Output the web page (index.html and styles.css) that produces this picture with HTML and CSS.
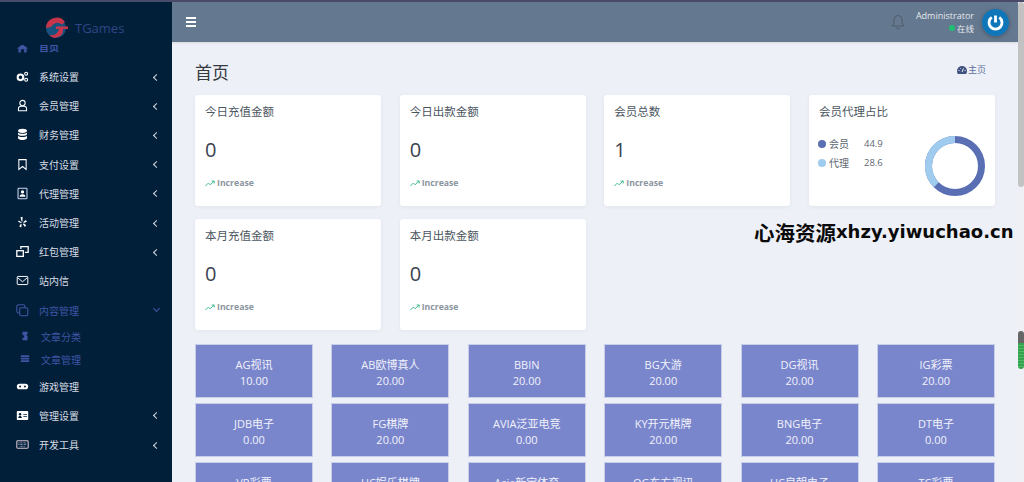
FILE: index.html
```html
<!DOCTYPE html>
<html lang="zh">
<head>
<meta charset="utf-8">
<title>TGames</title>
<link rel="stylesheet" href="styles.css">
</head>
<body>
<div class="topline"></div>
<div class="app">
<aside class="sidebar">
  <div class="logo">
    <svg class="logo-mark" width="26" height="26" viewBox="0 0 26 26"><circle cx="12" cy="13" r="10" fill="#17527f"/><path d="M2 13A10.500 10.500 0 0 1 21 7l-3 2.500A7 7 0 0 0 7 12Z" fill="#c8344a"/><path d="M12 11.500H24V14H19A8 8 0 0 1 5 20C11 21 14 18 15 14H12Z" fill="#c8344a"/></svg>
    <span class="logo-text">TGames</span>
  </div>
  <nav class="menu">
    <a class="item home"><svg class="ic" viewBox="0 0 16 16"><path d="M8 3 1 8h2v5h3V9h4v4h3V8h2Z" fill="#3f56a6"/></svg><span>首页</span></a>
    <a class="item"><svg class="ic" viewBox="0 0 16 16"><circle cx="5.500" cy="9" r="3.500" fill="none" stroke="#fff" stroke-width="2.500"/><circle cx="12.500" cy="4.500" r="1.800" fill="none" stroke="#fff" stroke-width="1.400"/><circle cx="12.500" cy="12" r="1.800" fill="none" stroke="#fff" stroke-width="1.400"/></svg><span>系统设置</span><i class="chev"></i></a>
    <a class="item"><svg class="ic" viewBox="0 0 16 16"><circle cx="8" cy="5" r="3.300" fill="none" stroke="#fff" stroke-width="1.300"/><path d="M3 14.500V12a3 3 0 0 1 3-3h4a3 3 0 0 1 3 3v2.500Z" fill="none" stroke="#fff" stroke-width="1.300"/></svg><span>会员管理</span><i class="chev"></i></a>
    <a class="item"><svg class="ic" viewBox="0 0 16 16"><ellipse cx="8" cy="3.500" rx="5.500" ry="2.500" fill="#fff"/><path d="M2.500 5.500c1 2 10 2 11 0V8c-1 2-10 2-11 0Zm0 4c1 2 10 2 11 0v3c-1 3-10 3-11 0Z" fill="#fff"/></svg><span>财务管理</span><i class="chev"></i></a>
    <a class="item"><svg class="ic" viewBox="0 0 16 16"><path d="M3.500 2h9v12L8 10.500 3.500 14Z" fill="none" stroke="#fff" stroke-width="1.300"/></svg><span>支付设置</span><i class="chev"></i></a>
    <a class="item"><svg class="ic" viewBox="0 0 16 16"><rect x="2.500" y="1.500" width="11" height="13" rx="1" fill="none" stroke="#cdd6f0" stroke-width="1.300"/><circle cx="8" cy="6" r="2" fill="#fff"/><path d="M4.500 12c0-4 7-4 7 0Z" fill="#fff"/></svg><span>代理管理</span><i class="chev"></i></a>
    <a class="item"><svg class="ic" viewBox="0 0 16 16"><path d="M5.500 1.500 8 1v5.500L7 7ZM2.500 7l1-1.500L7 8l-.5 1ZM4 13l2-3.500 1 .5-.5 4ZM8.500 10l1-1 3 2.500-1.500 2ZM9 7.500l3-2.500 1.500 2-4 1.500Z" fill="#fff"/></svg><span>活动管理</span><i class="chev"></i></a>
    <a class="item"><svg class="ic" viewBox="0 0 16 16"><rect x="1" y="7" width="8" height="7" fill="none" stroke="#fff" stroke-width="1.600"/><path d="M6 5V2h9v7h-4" fill="none" stroke="#fff" stroke-width="1.600"/></svg><span>红包管理</span><i class="chev"></i></a>
    <a class="item"><svg class="ic" viewBox="0 0 16 16"><rect x="1.500" y="3" width="13" height="10" rx="1" fill="none" stroke="#fff" stroke-width="1.200"/><path d="m2 4.500 6 5 6-5" fill="none" stroke="#fff" stroke-width="1.200"/></svg><span>站内信</span></a>
    <a class="item open"><svg class="ic" viewBox="0 0 16 16"><rect x="1" y="1" width="10" height="10" rx="2" fill="none" stroke="#3f56a6" stroke-width="1.300"/><rect x="4.500" y="4.500" width="10" height="10" rx="2" fill="#021f3a" stroke="#3f56a6" stroke-width="1.300"/></svg><span>内容管理</span><i class="chev down"></i></a>
    <a class="sub"><svg class="ic-sub" viewBox="0 0 12 12"><path d="M3 1h6v3H8v2h1v5H3V8h2V5H3Z" fill="#3f56a6"/></svg><span>文章分类</span></a>
    <a class="sub last"><svg class="ic-sub" viewBox="0 0 12 12"><path d="M1 1.500h10v2H1Zm0 3h10v2H1Zm0 3h10v2H1Z" fill="#3f56a6"/></svg><span>文章管理</span></a>
    <a class="item"><svg class="ic" viewBox="0 0 16 16"><rect x="1" y="4.500" width="14" height="7" rx="3.500" fill="#fff"/><circle cx="5" cy="8" r="1.200" fill="#021f3a"/><circle cx="11" cy="8" r="1.200" fill="#021f3a"/></svg><span>游戏管理</span></a>
    <a class="item"><svg class="ic" viewBox="0 0 16 16"><rect x="1" y="2.500" width="14" height="11" rx="1" fill="#fff"/><circle cx="5" cy="6.500" r="1.500" fill="#021f3a"/><path d="M2.800 11c0-3 4.400-3 4.400 0ZM9 6h4.500v1H9Zm0 2.500h4.500v1H9Z" fill="#021f3a"/></svg><span>管理设置</span><i class="chev"></i></a>
    <a class="item"><svg class="ic" viewBox="0 0 16 16"><rect x="1" y="3.500" width="14" height="9" rx="1" fill="none" stroke="#d7c6d2" stroke-width="1.300"/><path d="M3 6h10M3 8h10M4.500 10.300h7" stroke="#c9c6da" stroke-width="1" stroke-dasharray="1 .7"/></svg><span>开发工具</span><i class="chev"></i></a>
  </nav>
</aside>
<div class="main">
  <header class="topbar">
    <div class="burger"><b></b><b></b><b></b></div>
    <div class="top-right">
      <svg class="bell" width="14" height="16" viewBox="0 0 14 16"><path d="M7 1.500a4 4 0 0 0-4 4V9l-2 3h12l-2-3V5.500a4 4 0 0 0-4-4ZM5.500 13.500a1.500 1.500 0 0 0 3 0" fill="none" stroke="#4f5c6b" stroke-width="1"/></svg>
      <div class="user">
        <div class="uname">Administrator</div>
        <div class="ustatus"><i class="dot"></i>在线</div>
      </div>
      <div class="avatar"><svg width="27" height="27" viewBox="0 0 27 27"><circle cx="13.500" cy="13.500" r="13.500" fill="#0f76b9"/><path d="M9.700 8.400a6.500 6.500 0 1 0 7.600 0" fill="none" stroke="#fff" stroke-width="2.800"/><path d="M13.500 6.500v7" stroke="#fff" stroke-width="2.800"/></svg></div>
    </div>
  </header>
  <main class="content">
    <div class="page-head">
      <h1>首页</h1>
      <div class="crumb"><svg width="10" height="10" viewBox="0 0 10 10"><path d="M5 1a5 5 0 0 0-5 5c0 1 .3 2 .8 3h8.400c.5-1 .8-2 .8-3a5 5 0 0 0-5-5Z" fill="#3f5280"/><path d="M5 7 6.500 3.500M1.500 5.500h1M7.500 5.500h1M3 3l.6.6" stroke="#eef0f7" stroke-width="1"/></svg><span>主页</span></div>
    </div>
    <section class="cards">
      <article class="card"><h3>今日充值金额</h3><div class="num">0</div><div class="inc"><svg width="10" height="7" viewBox="0 0 12 8"><path d="M.5 7 4 3.500 6 5.500 11 1M8 1h3v3" fill="none" stroke="#45bd8f" stroke-width="1.200"/></svg>Increase</div></article>
      <article class="card"><h3>今日出款金额</h3><div class="num">0</div><div class="inc"><svg width="10" height="7" viewBox="0 0 12 8"><path d="M.5 7 4 3.500 6 5.500 11 1M8 1h3v3" fill="none" stroke="#45bd8f" stroke-width="1.200"/></svg>Increase</div></article>
      <article class="card"><h3>会员总数</h3><div class="num">1</div><div class="inc"><svg width="10" height="7" viewBox="0 0 12 8"><path d="M.5 7 4 3.500 6 5.500 11 1M8 1h3v3" fill="none" stroke="#45bd8f" stroke-width="1.200"/></svg>Increase</div></article>
      <article class="card ratio">
        <h3>会员代理占比</h3>
        <div class="ratio-body">
          <ul class="legend">
            <li><i class="lg a"></i><span class="lg-name">会员</span><span class="lg-val">44.9</span></li>
            <li><i class="lg b"></i><span class="lg-name">代理</span><span class="lg-val">28.6</span></li>
          </ul>
          <svg class="donut" width="60" height="60" viewBox="0 0 60 60"><circle cx="30" cy="30" r="26.500" fill="none" stroke="#5a6eb4" stroke-width="7"/><path d="M30 3.500A26.500 26.500 0 0 0 11.300 48.800" fill="none" stroke="#9fcbef" stroke-width="7"/></svg>
        </div>
      </article>
      <article class="card"><h3>本月充值金额</h3><div class="num">0</div><div class="inc"><svg width="10" height="7" viewBox="0 0 12 8"><path d="M.5 7 4 3.500 6 5.500 11 1M8 1h3v3" fill="none" stroke="#45bd8f" stroke-width="1.200"/></svg>Increase</div></article>
      <article class="card"><h3>本月出款金额</h3><div class="num">0</div><div class="inc"><svg width="10" height="7" viewBox="0 0 12 8"><path d="M.5 7 4 3.500 6 5.500 11 1M8 1h3v3" fill="none" stroke="#45bd8f" stroke-width="1.200"/></svg>Increase</div></article>
    </section>
    <section class="games">
      <div class="game">AG视讯<br>10.00</div><div class="game">AB欧博真人<br>20.00</div><div class="game">BBIN<br>20.00</div><div class="game">BG大游<br>20.00</div><div class="game">DG视讯<br>20.00</div><div class="game">IG彩票<br>20.00</div>
      <div class="game">JDB电子<br>0.00</div><div class="game">FG棋牌<br>20.00</div><div class="game">AVIA泛亚电竞<br>0.00</div><div class="game">KY开元棋牌<br>20.00</div><div class="game">BNG电子<br>20.00</div><div class="game">DT电子<br>0.00</div>
      <div class="game">VR彩票</div><div class="game">UC娱乐棋牌</div><div class="game">Asia新宝体育</div><div class="game">OG东方视讯</div><div class="game">UC皇朝电子</div><div class="game">TC彩票</div>
    </section>
  </main>
</div>
<div class="scrollbar"><div class="thumb"></div><div class="mini"></div></div>
</div>
<div class="watermark"><span class="wm-cn">心海资源</span><span class="wm-en">xhzy.yiwuchao.cn</span></div>
</body>
</html>
```

FILE: styles.css
```css
* { box-sizing: border-box; }
html, body { margin: 0; height: 482px; overflow: hidden; }
body { font-family: "Open Sans", "Noto Sans CJK SC", sans-serif; background: #eef0f7; color: #343a40; }
.topline { height: 2px; background: #4a4a6a; }
.app { display: flex; height: 480px; overflow: hidden; }
.sidebar { width: 172px; flex: none; background: #021f3a; overflow: hidden; }
.logo { height: 43px; display: flex; align-items: center; padding: 8px 0 0 44px; gap: 5px; }
.logo-text { color: #2f4585; font-size: 13px; font-family: "Open Sans", sans-serif; }
.menu { display: flex; flex-direction: column; }
.item { height: 29.200px; flex: none; display: flex; align-items: center; padding-left: 16px; color: #d7dce3; font-size: 10px; font-family: "Noto Sans CJK SC", sans-serif; position: relative; }
.item .ic { width: 13px; height: 13px; margin-right: 10px; flex: none; }
.item.home { height: 10px; align-items: flex-start; overflow: hidden; color: #3f56a6; font-weight: 700; margin-bottom: 7px; }
.item.home .ic { margin-top: -3px; }
.item.home span { margin-top: -5px; line-height: 14px; }
.item.open { color: #3f56a6; }
.chev { position: absolute; left: 154px; top: 50%; width: 5px; height: 5px; margin-top: -2px; border-left: 1.500px solid #d7dce3; border-bottom: 1.500px solid #d7dce3; transform: rotate(45deg); }
.chev.down { border-color: #3f56a6; transform: rotate(-45deg); margin-top: -4px; }
.sub { height: 23px; flex: none; display: flex; align-items: center; padding-left: 20px; color: #3f56a6; font-size: 10px; font-family: "Noto Sans CJK SC", sans-serif; }
.sub.last { margin-bottom: 1px; }
.ic-sub { width: 10px; height: 10px; margin-right: 11px; }
.main { width: 846px; flex: none; display: flex; flex-direction: column; }
.topbar { height: 40px; flex: none; background: #64788f; display: flex; align-items: center; justify-content: space-between; padding: 0 9px 0 14px; box-shadow: 0 1px 2px rgba(0,0,0,.1); }
.burger { display: flex; flex-direction: column; gap: 2px; }
.burger b { display: block; width: 10px; height: 2px; background: #fff; }
.top-right { display: flex; align-items: center; }
.bell { margin-right: 11px; }
.user { text-align: right; margin-right: 8px; font-family: "Open Sans", "Noto Sans CJK SC", sans-serif; }
.uname { color: #e6e9ee; font-size: 9px; line-height: 12px; }
.ustatus { color: #e6e9ee; font-size: 8.500px; line-height: 12px; font-family: "Noto Sans CJK SC", sans-serif; display: flex; align-items: center; justify-content: flex-end; gap: 2px; }
.dot { width: 6px; height: 6px; border-radius: 50%; background: #1fbf75; }
.avatar { width: 27px; height: 27px; border-radius: 50%; box-shadow: 0 1px 4px rgba(0,0,0,.3); display: flex; }
.content { padding: 0 23px; }
.page-head { height: 53px; flex: none; display: flex; justify-content: space-between; align-items: center; padding-top: 6px; }
h1 { font-size: 17px; font-weight: 400; margin: 0; color: #343a40; font-family: "Noto Sans CJK SC", sans-serif; }
.crumb { display: flex; align-items: center; gap: 1px; padding: 0 9px 4px 0; font-size: 9px; color: #5b6f9c; font-family: "Noto Sans CJK SC", sans-serif; }
.cards { display: grid; grid-template-columns: repeat(4, 186px); column-gap: 18.670px; row-gap: 13px; }
.card { height: 111px; background: #fff; border-radius: 3px; padding: 8px 10px 0; box-shadow: 0 1px 4px rgba(0,0,0,.05); }
.card h3 { margin: 0; font-size: 11.500px; line-height: 16px; font-weight: 400; color: #4b5560; font-family: "Noto Sans CJK SC", sans-serif; }
.num { font-size: 20px; line-height: 24px; margin-top: 19px; color: #39424e; font-family: "Open Sans", sans-serif; }
.inc { display: flex; align-items: center; gap: 2px; margin-top: 15px; font-size: 8.700px; font-weight: 700; color: #8b95a0; font-family: "Open Sans", sans-serif; line-height: 12px; }
.ratio-body { display: flex; justify-content: space-between; margin-top: 17px; }
.legend { list-style: none; margin: -2px 0 0 -1px; padding: 0; }
.legend li { display: flex; align-items: center; height: 19px; font-size: 10px; color: #5d6772; font-family: "Noto Sans CJK SC", "Open Sans", sans-serif; }
.lg { width: 8px; height: 8px; border-radius: 50%; margin-right: 3px; }
.lg.a { background: #5a6eb4; }
.lg.b { background: #9fcbef; }
.lg-val { margin-left: 15px; font-size: 9.500px; font-family: "Open Sans", sans-serif; }
.donut { display: block; }
.games { display: grid; grid-template-columns: repeat(6, 118px); column-gap: 18.400px; row-gap: 5px; margin-top: 14px; }
.game { height: 54px; background: #7a86cc; border: 1px solid #c9cee8; color: #f1f2fb; text-align: center; font-size: 11px; line-height: 15.500px; padding-top: 12px; font-family: "Open Sans", "Noto Sans CJK SC", sans-serif; }
.scrollbar { width: 6px; flex: none; background: #eef0f5; position: relative; }
.thumb { width: 6px; height: 185px; background: #c2c2c2; border-radius: 3px; }
.mini { position: absolute; left: 0; top: 329px; width: 6px; height: 38px; background: repeating-linear-gradient(#35a34d 0 2px, #4db865 2px 3px); border-top: 12px solid #666; border-radius: 3px; }
.watermark { position: absolute; left: 754px; top: 219px; line-height: 26px; font-weight: 700; color: #0a0a0a; white-space: nowrap; display: flex; align-items: center; }
.wm-cn { font-size: 20.500px; font-family: "Noto Sans CJK SC", sans-serif; }
.wm-en { font-size: 18px; font-family: "DejaVu Sans", sans-serif; }
```
